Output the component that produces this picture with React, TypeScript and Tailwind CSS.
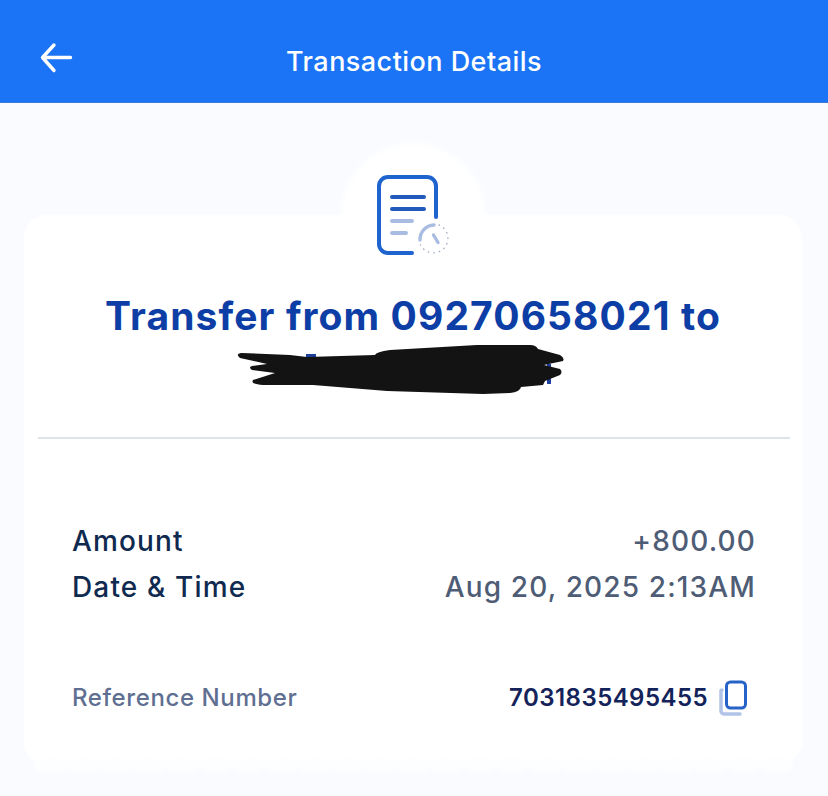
const scallops = Array.from({ length: 23 });

function BackArrow() {
  return (
    <svg width="34" height="31" viewBox="39 42 34 31" fill="none" stroke="#ffffff" strokeWidth="3.4" strokeLinecap="round" strokeLinejoin="round">
      <path d="M54 45L42.5 57.5L54 70.5M43 57.5H70.5" />
    </svg>
  );
}

function ReceiptIcon() {
  return (
    <svg width="80" height="90" viewBox="372 170 80 90" fill="none" strokeLinecap="round">
      <path
        d="M436 217V186a9 9 0 0 0-9-9H388a9 9 0 0 0-9 9V244a9 9 0 0 0 9 9H412"
        stroke="#1f63cf"
        strokeWidth="4"
      />
      <path d="M392 197H424M392 209H424" stroke="#2159bd" strokeWidth="4" />
      <path d="M392 221H412M392 233H406" stroke="#a9bde2" strokeWidth="4" />
      <path d="M420 240a14.5 14.5 0 0 1 14-15" stroke="#a9bde2" strokeWidth="3.4" />
      <path d="M433.5 235L438 242.5" stroke="#a9bde2" strokeWidth="3.4" />
      <path
        d="M439 225a14.5 14.5 0 1 1-18.5 20"
        stroke="#a3aec4"
        strokeWidth="1.4"
        strokeDasharray="0.5 5"
      />
    </svg>
  );
}

function CopyIcon() {
  return (
    <svg width="30" height="36" viewBox="717 680 30 36" fill="none">
      <path
        d="M721 690a1 1 0 0 0-1 1v20a3 3 0 0 0 3 3h16"
        stroke="#b2c3e8"
        strokeWidth="3.5"
        strokeLinecap="round"
      />
      <rect x="725.5" y="682" width="19" height="26" rx="4" stroke="#2563c9" strokeWidth="3" fill="#ffffff" />
    </svg>
  );
}

function Scribble() {
  return (
    <svg width="330" height="56" viewBox="235 342 330 56" className="block">
      <path d="M306 354h10v4h-10zM547 364h4v20h-4z" fill="#1d3f9e" />
      <path
        d="M241 353L290 355L307 357L375 355Q376 352 390 350L477 345L530 345Q536 345 538 349L560 355Q565 358 563 361L544 365L560 369Q563 372 560 375L545 381L543 385L521 387Q520 392 510 393L483 394L387 391L313 385L263 385Q250 384 253 380L275 373L252 370Q248 367 252 366L267 364L240 358Q235 354 241 353Z"
        fill="#131313"
      />
    </svg>
  );
}

export default function App() {
  return (
    <div className="w-[828px] h-[796px] overflow-hidden bg-[#f9fbff] font-['Inter',sans-serif]">
      {/* Header */}
      <header className="h-[103px] bg-[#1b74f6] border-b border-[#3a78d6] px-[38px] flex items-center relative">
        <div className="absolute left-[39px] top-[42px]">
          <BackArrow />
        </div>
        <h1 className="w-full text-center text-white text-[27px] font-medium tracking-[0.45px] pt-[23px]">
          Transaction Details
        </h1>
      </header>

      {/* Card */}
      <main className="relative mt-[112px] mx-[24px] h-[550px] w-[778px] bg-white rounded-[24px] shadow-[0_0_3px_0_#ffffff]">
        <div className="absolute left-[317px] -top-[72px] w-[144px] h-[144px] rounded-full bg-white blur-[3px]" />
        <div className="absolute left-[348px] -top-[45px]">
          <ReceiptIcon />
        </div>

        <div className="relative flex flex-col items-center pt-[77px]">
          <h2 className="text-[39px] leading-[48px] font-bold tracking-[1.1px] text-[#0d3ea6] whitespace-nowrap">
            Transfer from 09270658021 to
          </h2>
          <div className="h-[56px] mt-[2px] self-start ml-[211px]">
            <Scribble />
          </div>
        </div>

        <div className="relative ml-[14px] mr-[12px] mt-[39px] h-[2px] bg-[#dbe4ea]" />

        <div className="relative pl-[48px] pr-[46px] pt-[79px]">
          <div className="flex justify-between items-center h-[46px] text-[28px] tracking-[1.15px]">
            <span className="font-medium text-[#10294f]">Amount</span>
            <span className="font-[450] text-[#4e5c75]">+800.00</span>
          </div>
          <div className="flex justify-between items-center h-[46px] text-[28px] tracking-[1.15px]">
            <span className="font-medium text-[#10294f]">Date &amp; Time</span>
            <span className="font-[450] text-[#4e5c75]">Aug 20, 2025 2:13AM</span>
          </div>
          <div className="flex justify-between items-center mt-[65px] h-[46px]">
            <span className="text-[24px] font-medium tracking-[0.6px] text-[#5f6f92]">Reference Number</span>
            <span className="flex items-center gap-[10px] mr-[8px]">
              <span className="text-[24px] font-semibold tracking-[0.45px] text-[#14235a]">7031835495455</span>
              <CopyIcon />
            </span>
          </div>
        </div>

        {/* Scalloped bottom edge */}
        <div className="absolute left-[10px] bottom-[-7px] flex blur-[2px]">
          {scallops.map((_, i) => (
            <div key={i} className="w-[33px] h-[14px] rounded-full bg-[#fdfeff]" />
          ))}
        </div>
      </main>
    </div>
  );
}
